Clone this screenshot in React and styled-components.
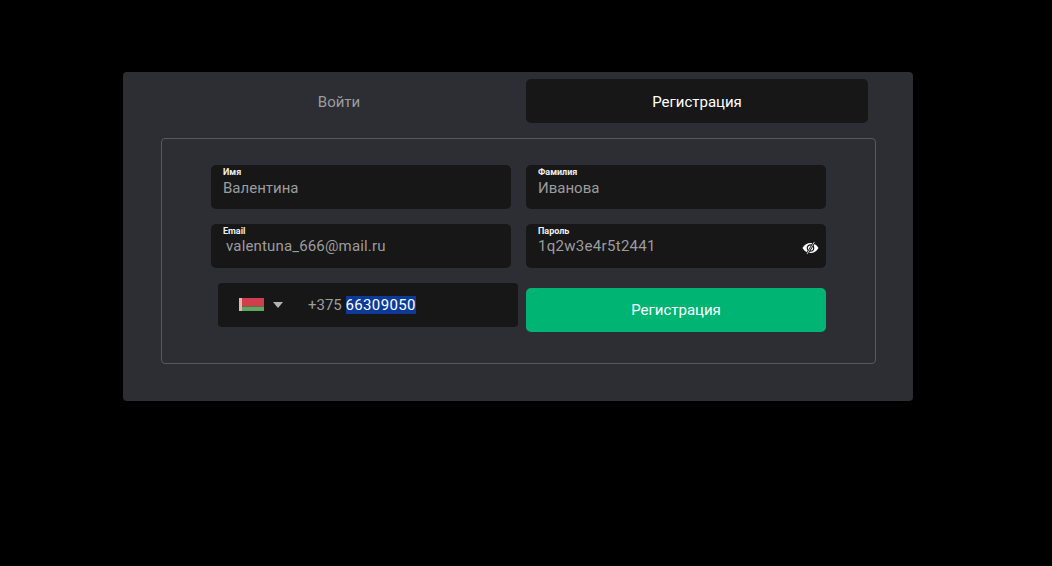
import React from "react";
import styled, { createGlobalStyle } from "styled-components";

const Global = createGlobalStyle`
  html, body { margin: 0; padding: 0; background: #000; }
  body { width: 1052px; height: 566px; overflow: hidden; font-family: Roboto, "Liberation Sans", sans-serif; }
`;
const Page = styled.div`
  padding: 72px 0 0 123px;
`;
const Card = styled.div`
  width: 790px;
  height: 329px;
  box-sizing: border-box;
  padding: 7px 37px 0 38px;
  background: #2d2e33;
  border-radius: 4px;
`;
const Tabs = styled.div`
  display: flex;
  gap: 16px;
  padding-left: 7px;
`;
const Tab = styled.div`
  width: 342px;
  height: 44px;
  box-sizing: border-box;
  padding-top: 1px;
  display: flex;
  align-items: center;
  justify-content: center;
  font-size: 15px;
  border-radius: 5px;
  color: ${p => (p.$active ? "#ffffff" : "#9c9c9f")};
  background: ${p => (p.$active ? "#171717" : "transparent")};
`;
const Panel = styled.div`
  margin-top: 15px;
  width: 715px;
  height: 226px;
  box-sizing: border-box;
  padding: 26px 0 0 49px;
  border: 1px solid #58595d;
  border-radius: 4px;
`;
const Row = styled.div`
  display: flex;
  gap: 15px;
  margin-bottom: 15px;
`;
const LastRow = styled.div`
  display: flex;
  align-items: flex-start;
  gap: 8px;
  padding-left: 7px;
`;
const Field = styled.div`
  position: relative;
  width: 300px;
  height: 44px;
  box-sizing: border-box;
  padding: ${p => p.$top || 14}px 12px 0;
  background: #171717;
  border-radius: 5px;
`;
const Label = styled.span`
  position: absolute;
  left: 12px;
  top: 2px;
  font-size: 9px;
  line-height: 11px;
  font-weight: 700;
  color: #f0f0f0;
`;
const Value = styled.div`
  font-size: 15px;
  line-height: 18px;
  letter-spacing: ${p => p.$spacing || 0}px;
  color: #9c9c9f;
  padding-left: ${p => p.$indent || 0}px;
`;
const EyeBtn = styled.span`
  position: absolute;
  right: 7px;
  top: 16px;
  width: 17px;
  height: 14px;
  display: block;
`;
const Phone = styled.div`
  width: 300px;
  height: 44px;
  display: flex;
  align-items: center;
  box-sizing: border-box;
  padding-left: 21px;
  background: #171717;
  border-radius: 4px;
`;
const Flag = styled.svg`
  width: 25px;
  height: 13px;
  margin-top: -1px;
  display: block;
`;
const Caret = styled.span`
  width: 0;
  height: 0;
  margin-left: 9px;
  border-left: 5.5px solid transparent;
  border-right: 5.5px solid transparent;
  border-top: 6px solid #b4b4b4;
`;
const PhoneText = styled.span`
  margin-left: 25px;
  font-size: 15px;
  line-height: 18px;
  color: #9c9c9f;
`;
const Selected = styled.span`
  background: #0c3a99;
  color: #ffffff;
  letter-spacing: 0.35px;
`;
const Submit = styled.div`
  width: 300px;
  height: 44px;
  margin-top: 5px;
  display: flex;
  align-items: center;
  justify-content: center;
  background: #00b574;
  border-radius: 5px;
  color: #ffffff;
  font-size: 15px;
`;

export default function App() {
  return (
    <>
      <Global />
      <Page>
        <Card>
          <Tabs>
            <Tab>Войти</Tab>
            <Tab $active>Регистрация</Tab>
          </Tabs>
          <Panel>
            <Row>
              <Field>
                <Label>Имя</Label>
                <Value>Валентина</Value>
              </Field>
              <Field>
                <Label>Фамилия</Label>
                <Value>Иванова</Value>
              </Field>
            </Row>
            <Row>
              <Field $top={13}>
                <Label>Email</Label>
                <Value $indent={3} $spacing={0.16}>valentuna_666@mail.ru</Value>
              </Field>
              <Field $top={13}>
                <Label>Пароль</Label>
                <Value $spacing={0.3}>1q2w3e4r5t2441</Value>
                <EyeBtn>
                  <svg width="17" height="14" viewBox="0 0 17 14">
                    <path d="M0.5 7C2.5 3.6 5.2 2 8.5 2s6 1.6 8 5c-2 3.4-4.7 5-8 5s-6-1.6-8-5z" fill="#fff" />
                    <circle cx="8.5" cy="7" r="3.2" fill="none" stroke="#171717" strokeWidth="1.2" />
                    <path d="M12.5 0.8L5 13.2" stroke="#171717" strokeWidth="2.4" />
                    <path d="M12.4 1L5 13" stroke="#d8d8d8" strokeWidth="0.9" />
                  </svg>
                </EyeBtn>
              </Field>
            </Row>
            <LastRow>
              <Phone>
                <Flag viewBox="0 0 25 13">
                  <rect width="25" height="8.6" fill="#cf3f4c" />
                  <rect y="8.6" width="25" height="4.4" fill="#5fa85f" />
                  <rect width="3" height="13" fill="#eab3ae" />
                </Flag>
                <Caret />
                <PhoneText>
                  +375 <Selected>66309050</Selected>
                </PhoneText>
              </Phone>
              <Submit>Регистрация</Submit>
            </LastRow>
          </Panel>
        </Card>
      </Page>
    </>
  );
}
